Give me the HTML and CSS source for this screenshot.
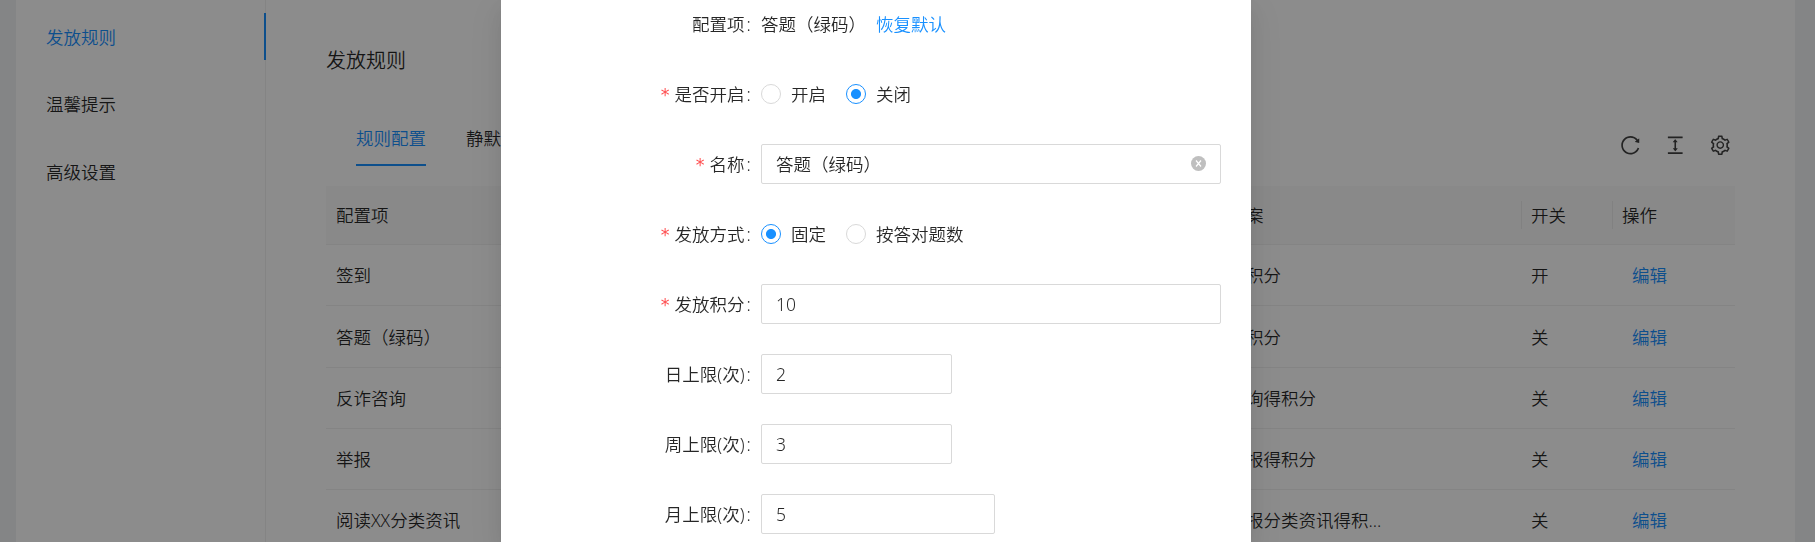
FILE: index.html
```html
<!DOCTYPE html>
<html lang="zh-CN">
<head>
<meta charset="utf-8">
<title>发放规则</title>
<link rel="stylesheet" href="styles.css">
</head>
<body>
<div class="page">
  <nav class="menu">
    <a class="menu-item active">发放规则</a>
    <a class="menu-item">温馨提示</a>
    <a class="menu-item">高级设置</a>
  </nav>
  <main class="content">
    <h1 class="title">发放规则</h1>
    <div class="toolbar">
      <div class="tabs">
        <span class="tab active">规则配置</span>
        <span class="tab">静默</span>
      </div>
      <div class="tools">
        <svg class="icon" viewBox="0 0 1024 1024"><path d="M909.1 209.3l-56.4 44.1C775.8 155.1 656.2 92 521.9 92 290 92 102.3 279.5 102 511.5 101.700 743.700 289.800 932 521.900 932c181.300 0 335.800-115 394.600-276.100 1.500-4.200-.7-8.900-4.900-10.300l-56.700-19.500a8 8 0 0 0-10.100 4.800c-1.800 5-3.800 10-5.900 14.900-17.300 41-42.100 77.800-73.700 109.400A344.770 344.770 0 0 1 655.900 829c-42.300 17.900-87.400 27-133.800 27-46.500 0-91.500-9.100-133.800-27A341.500 341.500 0 0 1 279 755.200a342.160 342.160 0 0 1-73.700-109.400c-17.900-42.400-27-87.400-27-133.900s9.100-91.500 27-133.900c17.300-41 42.100-77.800 73.700-109.400 31.600-31.600 68.400-56.400 109.300-73.800 42.300-17.900 87.400-27 133.800-27 46.500 0 91.500 9.100 133.800 27a341.500 341.500 0 0 1 109.300 73.800c9.900 9.900 19.200 20.400 27.800 31.400l-60.200 47a8 8 0 0 0 3 14.100l175.600 43c5 1.200 9.900-2.600 9.900-7.700l.8-180.900c-.1-6.600-7.800-10.300-13-6.200z"/></svg>
        <svg class="icon" viewBox="0 0 1024 1024"><path d="M840 836H184c-4.400 0-8 3.600-8 8v60c0 4.400 3.600 8 8 8h656c4.400 0 8-3.600 8-8v-60c0-4.400-3.600-8-8-8zm0-724H184c-4.400 0-8 3.600-8 8v60c0 4.400 3.600 8 8 8h656c4.400 0 8-3.600 8-8v-60c0-4.400-3.600-8-8-8zM610.800 378c6 0 9.400-7 5.700-11.700L515.700 238.700a7.140 7.140 0 0 0-11.300 0L403.600 366.300a7.230 7.230 0 0 0 5.700 11.700H476v268h-62.800c-6 0-9.400 7-5.700 11.700l100.800 127.500c2.900 3.700 8.500 3.700 11.300 0l100.800-127.500c3.700-4.700.4-11.700-5.700-11.700H548V378h62.800z"/></svg>
        <svg class="icon" viewBox="0 0 1024 1024"><path d="M924.8 625.7l-65.500-56c3.100-19 4.700-38.400 4.700-57.800s-1.600-38.800-4.700-57.800l65.500-56a32.030 32.030 0 0 0 9.300-35.200l-.9-2.600a443.740 443.740 0 0 0-79.700-137.900l-1.800-2.100a32.120 32.120 0 0 0-35.100-9.500l-81.300 28.900c-30-24.600-63.500-44-99.700-57.600l-15.700-85a32.050 32.050 0 0 0-25.800-25.700l-2.700-.5c-52.100-9.400-106.900-9.400-159 0l-2.700.5a32.050 32.050 0 0 0-25.800 25.700l-15.800 85.400a351.860 351.860 0 0 0-99 57.400l-81.900-29.100a32 32 0 0 0-35.100 9.500l-1.800 2.100a446.020 446.020 0 0 0-79.700 137.900l-.9 2.600c-4.500 12.500-.8 26.500 9.300 35.200l66.300 56.600c-3.100 18.800-4.600 38-4.600 57.100 0 19.200 1.500 38.400 4.600 57.100L99 625.500a32.030 32.030 0 0 0-9.300 35.200l.9 2.600c18.100 50.400 44.900 96.900 79.700 137.900l1.800 2.100a32.120 32.120 0 0 0 35.100 9.500l81.900-29.100c29.800 24.500 63.100 43.900 99 57.400l15.800 85.400a32.050 32.050 0 0 0 25.800 25.700l2.700.5a449.400 449.400 0 0 0 159 0l2.700-.5a32.050 32.050 0 0 0 25.800-25.700l15.700-85a350 350 0 0 0 99.700-57.600l81.300 28.900a32 32 0 0 0 35.100-9.500l1.800-2.100c34.800-41.100 61.600-87.500 79.700-137.900l.9-2.600c4.500-12.300.8-26.300-9.300-35zM788.300 465.900c2.500 15.100 3.800 30.600 3.800 46.100s-1.300 31-3.800 46.100l-6.600 40.100 74.700 63.900a370.030 370.030 0 0 1-42.600 73.600L721 702.800l-31.400 25.800c-23.900 19.600-50.500 35-79.300 45.800l-38.100 14.300-17.900 97a377.500 377.500 0 0 1-85 0l-17.900-97.200-37.800-14.500c-28.500-10.800-55-26.200-78.700-45.700l-31.400-25.900-93.400 33.200c-17-22.900-31.200-47.600-42.600-73.600l75.500-64.500-6.500-40c-2.400-14.900-3.700-30.300-3.700-45.500 0-15.300 1.200-30.600 3.700-45.500l6.500-40-75.500-64.500c11.300-26.100 25.600-50.700 42.600-73.600l93.400 33.200 31.400-25.900c23.700-19.500 50.200-34.900 78.700-45.700l37.900-14.300 17.900-97.200c28.100-3.200 56.800-3.200 85 0l17.900 97 38.100 14.300c28.700 10.800 55.400 26.200 79.300 45.800l31.400 25.800 92.800-32.900c17 22.900 31.200 47.600 42.600 73.600L781.800 426l6.500 39.900zM512 326c-97.200 0-176 78.800-176 176s78.800 176 176 176 176-78.800 176-176-78.800-176-176-176zm79.200 255.200A111.600 111.600 0 0 1 512 614c-29.900 0-58-11.700-79.200-32.800A111.600 111.600 0 0 1 400 502c0-29.900 11.700-58 32.800-79.200C454 401.600 482.100 390 512 390c29.900 0 58 11.600 79.200 32.800A111.600 111.600 0 0 1 624 502c0 29.900-11.700 58-32.800 79.200z"/></svg>
      </div>
    </div>
    <div class="table">
      <div class="row head"><span class="cell">配置项</span><span class="cell">案</span><span class="cell divided">开关</span><span class="cell divided">操作</span></div>
      <div class="row"><span class="cell">签到</span><span class="cell">积分</span><span class="cell">开</span><a class="cell link">编辑</a></div>
      <div class="row tall"><span class="cell">答题（绿码）</span><span class="cell">积分</span><span class="cell">关</span><a class="cell link">编辑</a></div>
      <div class="row"><span class="cell">反诈咨询</span><span class="cell">询得积分</span><span class="cell">关</span><a class="cell link">编辑</a></div>
      <div class="row"><span class="cell">举报</span><span class="cell">报得积分</span><span class="cell">关</span><a class="cell link">编辑</a></div>
      <div class="row"><span class="cell">阅读XX分类资讯</span><span class="cell">报分类资讯得积...</span><span class="cell">关</span><a class="cell link">编辑</a></div>
    </div>
  </main>
</div>
<div class="mask">
  <form class="modal">
    <div class="item"><div class="label">配置项<i class="colon">:</i></div><div class="control"><span class="name">答题（绿码）</span><a class="reset">恢复默认</a></div></div>
    <div class="item"><div class="label"><b class="star">*</b>是否开启<i class="colon">:</i></div><div class="control"><span class="radio"></span><span class="option">开启</span><span class="radio checked"></span><span class="option">关闭</span></div></div>
    <div class="item"><div class="label"><b class="star">*</b>名称<i class="colon">:</i></div><div class="control"><div class="input"><span>答题（绿码）</span><svg class="clear" viewBox="0 0 15 15"><circle cx="7.5" cy="7.5" r="7.5"/><path d="M5 4.500l5 6M10 4.500l-5 6"/></svg></div></div></div>
    <div class="item"><div class="label"><b class="star">*</b>发放方式<i class="colon">:</i></div><div class="control"><span class="radio checked"></span><span class="option">固定</span><span class="radio"></span><span class="option">按答对题数</span></div></div>
    <div class="item"><div class="label"><b class="star">*</b>发放积分<i class="colon">:</i></div><div class="control"><div class="input">10</div></div></div>
    <div class="item"><div class="label">日上限(次)<i class="colon">:</i></div><div class="control"><div class="input short">2</div></div></div>
    <div class="item"><div class="label">周上限(次)<i class="colon">:</i></div><div class="control"><div class="input short">3</div></div></div>
    <div class="item"><div class="label">月上限(次)<i class="colon">:</i></div><div class="control"><div class="input medium">5</div></div></div>
  </form>
</div>
</body>
</html>
```
FILE: styles.css
```css
* { box-sizing: border-box; }
body {
  margin: 0;
  height: 542px;
  overflow: hidden;
  background: #f0f2f5;
  color: rgba(0, 0, 0, .85);
  font: 350 17.5px/28px "Noto Sans", "Noto Sans CJK SC", sans-serif;
}
.page {
  display: flex;
  height: 542px;
  margin: 0 20px 0 16px;
  background: #fff;
}
.menu {
  display: flex;
  flex-direction: column;
  gap: 20.500px;
  width: 250px;
  padding-top: 13px;
  border-right: 1px solid #f0f0f0;
}
.menu-item {
  height: 47px;
  margin-right: -1px;
  padding-left: 30px;
  line-height: 48px;
}
.menu-item:nth-child(2) { line-height: 47px; }
.menu-item.active {
  color: #1890ff;
  border-right: 2px solid #1890ff;
}
.content {
  flex: 1;
  padding: 44px 60px 0;
}
.title {
  margin: 0;
  font-size: 20px;
  font-weight: 350;
  line-height: 34px;
}
.toolbar {
  display: flex;
  justify-content: space-between;
  height: 108px;
  padding: 35px 4px 0 30px;
}
.tabs { display: flex; gap: 40px; }
.tab {
  height: 53px;
  padding-top: 11px;
}
.tab.active {
  color: #1890ff;
  border-bottom: 2px solid #1890ff;
}
.tools {
  display: flex;
  gap: 22.500px;
  padding-top: 21px;
}
.icon {
  width: 22.500px;
  height: 22.500px;
  fill: rgba(0, 0, 0, .75);
}
.row {
  display: grid;
  grid-template-columns: 910px 285px 91px 123px;
  align-items: center;
  height: 61px;
  border-bottom: 1px solid #f0f0f0;
}
.row.head {
  height: 59px;
  background: #fafafa;
}
.row.tall { height: 62px; }
.cell { padding-left: 10px; white-space: nowrap; }
.cell.divided { padding-left: 9px; border-left: 1px solid #ebebeb; }
.cell.link {
  padding-left: 20px;
  color: #1890ff;
}
.mask {
  position: fixed;
  inset: 0;
  display: flex;
  padding-left: 501px;
  overflow: hidden;
  background: rgba(0, 0, 0, .45);
}
.modal {
  display: flex;
  flex-direction: column;
  gap: 30px;
  width: 750px;
  padding-top: 4px;
  background: #fff;
  box-shadow: 0 4px 8px -5px rgba(0, 0, 0, .12), 0 8px 20px rgba(0, 0, 0, .08), 0 11px 35px 10px rgba(0, 0, 0, .05);
}
.item {
  display: flex;
  height: 40px;
  flex: none;
}
.label {
  display: flex;
  justify-content: flex-end;
  width: 260px;
  line-height: 41px;
}
.colon {
  width: 5px;
  margin: 0 9.500px 0 2px;
  font-style: normal;
}
.star {
  margin: 1px 5px 0 0;
  color: #ff4d4f;
  font: 400 17.5px/41px "DejaVu Sans", sans-serif;
}
.control {
  display: flex;
  align-items: center;
  width: 460px;
}
.name { width: 115px; }
.reset { color: #1890ff; }
.radio {
  width: 20px;
  height: 20px;
  margin-right: 10px;
  border: 1px solid #d9d9d9;
  border-radius: 50%;
}
.radio.checked {
  border-color: #1890ff;
  background: radial-gradient(circle, #1890ff 4.600px, #fff 5.400px);
}
.option { margin-right: 20px; }
.input {
  display: flex;
  align-items: center;
  justify-content: space-between;
  width: 460px;
  height: 40px;
  padding: 0 14px;
  border: 1px solid #d9d9d9;
  border-radius: 2px;
}
.input.short { width: 191px; }
.input.medium { width: 234px; }
.clear {
  width: 15px;
  height: 15px;
  margin-bottom: 1px;
  fill: #bfbfbf;
}
.clear path { stroke: #fff; stroke-width: 1.200; }
```
